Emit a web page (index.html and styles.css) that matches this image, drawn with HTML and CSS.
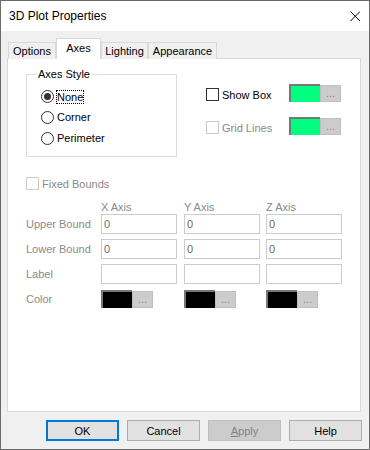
FILE: index.html
```html
<!DOCTYPE html>
<html lang="en">
<head>
    <meta charset="UTF-8">
    <title>3D Plot Properties</title>
    <link rel="stylesheet" href="styles.css">
</head>
<body>
    <div class="window">
        <div class="titlebar">
            <span class="title">3D Plot Properties</span>
            <svg class="close" viewBox="0 0 10 10" width="10" height="10">
                <path d="M0.5 0.5 L10 10 M10 0.5 L0.5 10" stroke="#000" stroke-width="1" fill="none"/>
            </svg>
        </div>

        <div class="tabs">
            <div class="tab tab-options">Options</div>
            <div class="tab tab-axes active">Axes</div>
            <div class="tab tab-lighting">Lighting</div>
            <div class="tab tab-appearance">Appearance</div>
        </div>

        <div class="panel">
            <div class="axes-top">
                <div class="groupbox">
                    <span class="groupbox-title">Axes Style</span>
                    <div class="radio-list">
                        <div class="radio-row"><span class="radio checked"></span><span class="radio-text focus">None</span></div>
                        <div class="radio-row"><span class="radio"></span><span class="radio-text">Corner</span></div>
                        <div class="radio-row"><span class="radio"></span><span class="radio-text">Perimeter</span></div>
                    </div>
                </div>

                <div class="options-col">
                    <div class="option-row">
                        <div class="check-label"><span class="check"></span>Show Box</div>
                        <span class="swatch green"></span><span class="more">...</span>
                    </div>
                    <div class="option-row">
                        <div class="check-label disabled"><span class="check"></span>Grid Lines</div>
                        <span class="swatch green"></span><span class="more">...</span>
                    </div>
                </div>
            </div>

            <div class="fixed-row disabled"><span class="check"></span>Fixed Bounds</div>

            <div class="axis-heads">
                <span class="head-x">X Axis</span>
                <span class="head-y">Y Axis</span>
                <span class="head-z">Z Axis</span>
            </div>

            <div class="bounds">
                <span class="row-label">Upper Bound</span>
                <input class="textbox" type="text" value="0" disabled>
                <input class="textbox" type="text" value="0" disabled>
                <input class="textbox" type="text" value="0" disabled>

                <span class="row-label">Lower Bound</span>
                <input class="textbox" type="text" value="0" disabled>
                <input class="textbox" type="text" value="0" disabled>
                <input class="textbox" type="text" value="0" disabled>

                <span class="row-label">Label</span>
                <input class="textbox" type="text" value="" disabled>
                <input class="textbox" type="text" value="" disabled>
                <input class="textbox" type="text" value="" disabled>

                <span class="row-label">Color</span>
                <div class="color-pick"><span class="swatch black"></span><span class="more">...</span></div>
                <div class="color-pick"><span class="swatch black"></span><span class="more">...</span></div>
                <div class="color-pick"><span class="swatch black"></span><span class="more">...</span></div>
            </div>
        </div>

        <div class="buttons">
            <button class="btn default">OK</button>
            <button class="btn">Cancel</button>
            <button class="btn disabled"><u>A</u>pply</button>
            <button class="btn">Help</button>
        </div>
    </div>
</body>
</html>
```

FILE: styles.css
```css
* {
    box-sizing: border-box;
}

body {
    margin: 0;
    background: #fff;
    color: #000;
    font-family: "Liberation Sans", Arial, sans-serif;
    font-size: 11px;
}

.window {
    width: 370px;
    height: 450px;
    border: 1px solid #6a6a6a;
    background: #f0f0f0;
}

/* Title bar */
.titlebar {
    height: 30px;
    background: #fff;
    display: flex;
    align-items: center;
    justify-content: space-between;
    padding: 0 9px 0 8px;
}

.title {
    font-size: 12px;
}

.close {
    display: block;
}

/* Tabs */
.tabs {
    display: flex;
    align-items: flex-end;
    height: 21px;
    margin: 7px 0 -1px 7px;
}

.tab {
    height: 17px;
    border: 1px solid #d9d9d9;
    border-bottom: none;
    background: #f0f0f0;
    display: flex;
    align-items: center;
    justify-content: center;
}

.tab.active {
    position: relative;
    height: 21px;
    padding-bottom: 2px;
    background: #fff;
}

.tab-options { width: 48px; }
.tab-axes { width: 45px; }
.tab-lighting { width: 47px; }
.tab-appearance { width: 69px; }

/* Panel */
.panel {
    width: 354px;
    height: 354px;
    margin-left: 6px;
    background: #fff;
    border: 1px solid #d9d9d9;
    padding: 15px 0 0 18px;
}

.axes-top {
    display: flex;
    align-items: flex-start;
}

.groupbox {
    width: 151px;
    height: 83px;
    border: 1px solid #dcdcdc;
}

.groupbox-title {
    display: table;
    margin: -7px 0 0 9px;
    padding: 0 2px;
    background: #fff;
    line-height: 13px;
}

.radio-list {
    padding: 5px 0 0 14px;
}

.radio-row {
    display: flex;
    align-items: center;
    height: 21px;
}

.radio {
    width: 13px;
    height: 13px;
    border: 1px solid #333;
    border-radius: 50%;
    background: #fff;
    display: flex;
    align-items: center;
    justify-content: center;
}

.radio.checked::after {
    content: "";
    width: 7px;
    height: 7px;
    border-radius: 50%;
    background: #333;
}

.radio-text {
    margin-left: 3px;
    line-height: 13px;
}

.radio-text.focus {
    margin-left: 2px;
    border: 1px dotted #000;
    line-height: 12px;
}

.options-col {
    display: flex;
    flex-direction: column;
    gap: 15px;
    margin: 10px 0 0 29px;
}

.option-row {
    display: flex;
    align-items: flex-end;
    height: 18px;
}

.check-label {
    display: flex;
    align-items: center;
    width: 83px;
    height: 18px;
    padding-top: 3px;
}

.check {
    width: 13px;
    height: 13px;
    margin-right: 3px;
    border: 1px solid #333;
    background: #fff;
}

.disabled {
    color: #8a8a8a;
}

.disabled .check {
    border-color: #cccccc;
}

.swatch {
    width: 31px;
    height: 18px;
    border-top: 2px solid #777;
    border-left: 2px solid #777;
}

.swatch.green {
    background: #00ff80;
}

.swatch.black {
    background: #000;
}

.more {
    width: 21px;
    height: 17px;
    border: 1px solid #bfbfbf;
    background: #cccccc;
    color: #888;
    text-align: center;
    line-height: 15px;
}

/* Bounds */
.fixed-row {
    display: flex;
    align-items: center;
    height: 13px;
    margin-top: 20px;
}

.axis-heads {
    display: flex;
    height: 13px;
    margin-top: 11px;
    padding-left: 75px;
    color: #8a8a8a;
    line-height: 13px;
}

.head-x { width: 83px; }
.head-y { width: 82px; }
.head-z { width: 76px; }

.bounds {
    display: grid;
    grid-template-columns: 75px 83px 82px 76px;
    grid-auto-rows: 20px;
    row-gap: 5px;
    align-items: center;
}

.row-label {
    color: #8a8a8a;
}

.textbox {
    width: 76px;
    height: 20px;
    margin: 0;
    padding: 0 2px;
    border: 1px solid #cccccc;
    background: #fff;
    color: #6d6d6d;
    font: 11px "Liberation Sans", Arial, sans-serif;
}

.color-pick {
    display: flex;
    align-items: flex-end;
    height: 18px;
}

/* Dialog buttons */
.buttons {
    display: flex;
    gap: 8px;
    margin: 8px 0 0 45px;
}

.btn {
    width: 73px;
    height: 21px;
    padding: 0;
    border: 1px solid #adadad;
    background: #e1e1e1;
    color: #000;
    font: 11px "Liberation Sans", Arial, sans-serif;
}

.btn.default {
    border: 2px solid #0078d7;
}

.btn.disabled {
    border-color: #bfbfbf;
    background: #cccccc;
    color: #838383;
}
```
